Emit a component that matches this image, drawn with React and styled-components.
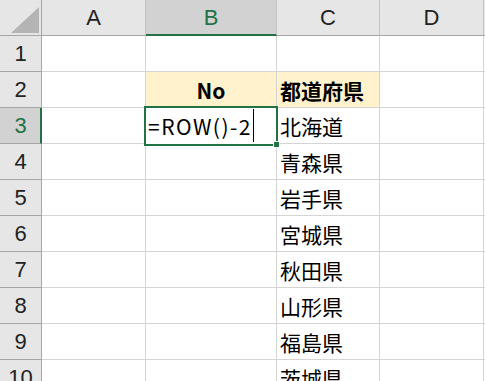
import React from "react";
import styled, { createGlobalStyle } from "styled-components";

const GlobalStyle = createGlobalStyle`
  html, body {
    margin: 0;
    padding: 0;
    background: #ffffff;
    overflow: hidden;
  }
`;

const GREEN = "#217346";
const GRID = "#d4d4d4";

const Sheet = styled.div`
  display: grid;
  grid-template-columns: 42px 104px 131px 103px 104px 1fr;
  grid-auto-rows: 36px;
  width: 485px;
  height: 381px;
  overflow: hidden;
  font-family: "Noto Sans CJK JP", "Liberation Sans", sans-serif;
  background: #ffffff;
`;

const Corner = styled.div`
  background: #e6e6e6;
  border-right: 1px solid #a6a6a6;
  border-bottom: 1px solid #a6a6a6;
  box-sizing: border-box;

  svg {
    display: block;
  }
`;

const ColHeader = styled.div`
  box-sizing: border-box;
  display: flex;
  align-items: center;
  justify-content: center;
  background: ${(p) => (p.$selected ? "#d2d2d2" : "#e6e6e6")};
  color: ${(p) => (p.$selected ? GREEN : "#222222")};
  border-right: 1px solid #c4c4c4;
  border-bottom: ${(p) => (p.$selected ? `2px solid ${GREEN}` : "1px solid #a6a6a6")};
  font-family: "Liberation Sans", Arial, sans-serif;
  font-size: 22px;
  padding-top: ${(p) => (p.$selected ? "1px" : "0")};
`;

const RowHeader = styled.div`
  box-sizing: border-box;
  display: flex;
  align-items: center;
  justify-content: center;
  background: ${(p) => (p.$selected ? "#d2d2d2" : "#e6e6e6")};
  color: ${(p) => (p.$selected ? GREEN : "#222222")};
  border-right: ${(p) => (p.$selected ? `2px solid ${GREEN}` : "1px solid #a6a6a6")};
  border-bottom: 1px solid #a6a6a6;
  font-family: "Liberation Sans", Arial, sans-serif;
  font-size: 22px;
  padding-left: ${(p) => (p.$selected ? "1px" : "0")};
`;

const Cell = styled.div`
  box-sizing: border-box;
  position: relative;
  display: flex;
  align-items: center;
  justify-content: ${(p) => (p.$center ? "center" : "flex-start")};
  padding-left: ${(p) => (p.$center ? "0" : "3px")};
  background: ${(p) => (p.$fill ? "#fff2cc" : "#ffffff")};
  border-right: 1px solid ${GRID};
  border-bottom: 1px solid ${GRID};
  font-size: 21px;
  font-weight: ${(p) => (p.$bold ? 700 : 400)};
  color: #000000;
  white-space: nowrap;
`;

const ActiveCell = styled(Cell)`
  outline: 2px solid ${GREEN};
  outline-offset: -1px;
  z-index: 2;
  padding-left: 3px;
  margin-left: -1px;
  margin-top: -1px;
  height: 38px;
  letter-spacing: 1.5px;
`;

const Caret = styled.span`
  display: inline-block;
  width: 1px;
  height: 33px;
  background: #000000;
  margin-left: 1px;
`;

const FillHandle = styled.span`
  position: absolute;
  right: -4px;
  bottom: -4px;
  width: 5px;
  height: 5px;
  background: ${GREEN};
  border: 1px solid #ffffff;
`;

const cols = ["A", "B", "C", "D"];
const prefs = ["北海道", "青森県", "岩手県", "宮城県", "秋田県", "山形県", "福島県", "茨城県"];

export default function App() {
  const rows = [];
  for (let r = 1; r <= 10; r++) {
    rows.push(
      <RowHeader key={`rh${r}`} $selected={r === 3}>
        {r}
      </RowHeader>
    );
    cols.forEach((c) => {
      const key = `${c}${r}`;
      if (r === 2 && c === "B") {
        rows.push(
          <Cell key={key} $fill $bold $center>
            No
          </Cell>
        );
      } else if (r === 2 && c === "C") {
        rows.push(
          <Cell key={key} $fill $bold>
            都道府県
          </Cell>
        );
      } else if (r === 3 && c === "B") {
        rows.push(
          <ActiveCell key={key}>
            =ROW()-2
            <Caret />
            <FillHandle />
          </ActiveCell>
        );
      } else if (r >= 3 && c === "C") {
        rows.push(<Cell key={key}>{prefs[r - 3]}</Cell>);
      } else {
        rows.push(<Cell key={key} />);
      }
    });
    rows.push(<Cell key={`e${r}`} />);
  }

  return (
    <>
      <GlobalStyle />
      <Sheet>
        <Corner>
          <svg width="42" height="36" viewBox="0 0 42 36">
            <polygon points="39,7 39,33 11,33" fill="#b4b4b4" />
          </svg>
        </Corner>
        {cols.map((c) => (
          <ColHeader key={c} $selected={c === "B"}>
            {c}
          </ColHeader>
        ))}
        <ColHeader />
        {rows}
      </Sheet>
    </>
  );
}
